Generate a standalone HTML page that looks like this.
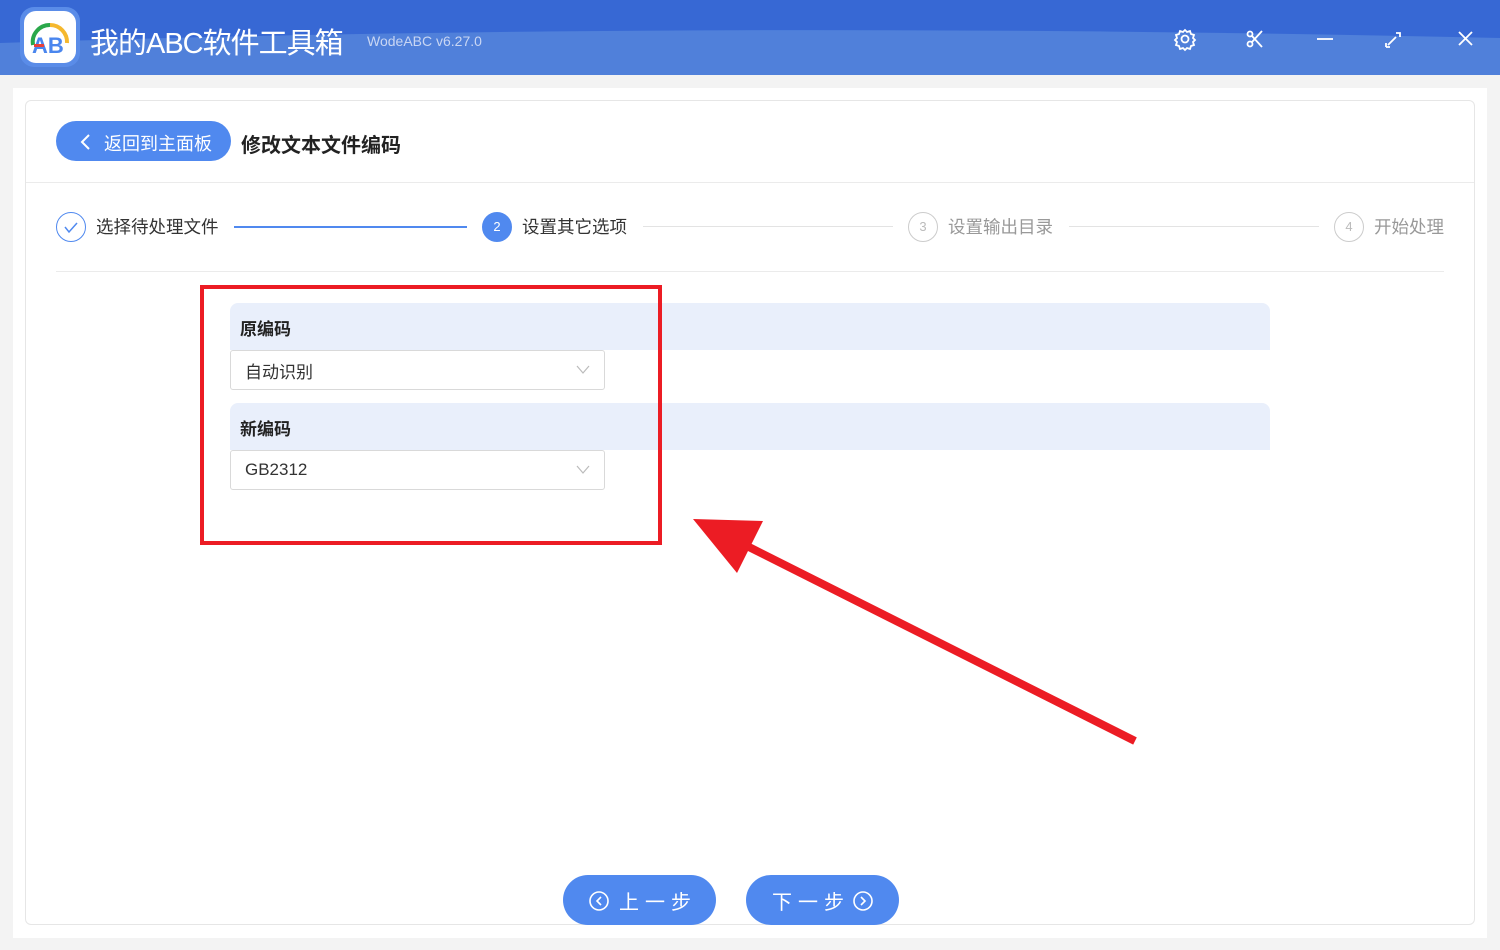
<!DOCTYPE html>
<html><head><meta charset="utf-8"><style>
*{margin:0;padding:0;box-sizing:border-box}
body{width:1500px;height:950px;background:#f3f3f3;font-family:"Liberation Sans","Noto Sans CJK SC",sans-serif;position:relative;overflow:hidden}
.abs{position:absolute}
.card{left:13px;top:88px;width:1474px;height:850px;background:#fff}
.inner{left:25px;top:100px;width:1450px;height:825px;border:1px solid #e6e6e6;border-radius:6px;background:#fff}
.t{white-space:nowrap}
.step{color:#333;font-size:17.5px}
.circ{width:30px;height:30px;border-radius:50%;border:1px solid #ccc;color:#bbb;font-size:13px;text-align:center;line-height:28px}
.panel{left:230px;width:1040px;height:47px;background:#e9effb;border-radius:8px 8px 0 0;font-weight:bold;font-size:17px;color:#222;padding:12px 0 0 10px}
.sel{left:230px;width:375px;height:40px;border:1px solid #d9d9d9;border-radius:3px;background:#fff;font-size:17px;color:#333;padding:7px 0 0 14px}
.btn{height:50px;width:153px;border-radius:25px;background:#5089ef;color:#fff;font-size:20px;letter-spacing:6px}
</style></head><body>
<svg class="abs" style="left:0;top:0" width="1500" height="75"><rect width="1500" height="75" fill="#3768d4"/><path d="M0 43 Q700 20 1500 38 L1500 75 L0 75Z" fill="#5080da"/></svg>
<div class="abs" style="left:20px;top:7px;width:60px;height:60px;border-radius:14px;background:#5a8ce8"></div>
<div class="abs" style="left:24px;top:11px;width:52px;height:52px;border-radius:12px;background:#fff"></div>
<svg class="abs" style="left:24px;top:11px" width="52" height="52"><path d="M9 34 A17 17 0 0 1 26 14" stroke="#2aa84a" stroke-width="4" fill="none"/><path d="M26 14 A17 17 0 0 1 43 32" stroke="#f5b82e" stroke-width="4" fill="none"/><text x="8" y="42" font-size="22" font-weight="bold" fill="#4a86ee" font-family="Liberation Sans">AB</text><rect x="10" y="33" width="10" height="3" fill="#e8403a"/></svg>
<div class="abs t" style="left:90px;top:20px;color:#fff;font-size:29px;letter-spacing:-1px">我的ABC软件工具箱</div>
<div class="abs t" style="left:367px;top:33px;color:#c9d6f3;font-size:14px">WodeABC v6.27.0</div>
<svg class="abs" style="left:1170px;top:25px" width="310" height="30" fill="none" stroke="#fff" stroke-width="1.8">
<circle cx="15" cy="14" r="3.5"/><path d="M15 5l2 2 3-1 1 3 3 1-1 3 2 2-2 2 1 3-3 1-1 3-3-1-2 2-2-2-3 1-1-3-3-1 1-3-2-2 2-2-1-3 3-1 1-3 3 1z"/>
<circle cx="80" cy="9" r="2.5"/><circle cx="80" cy="19" r="2.5"/><path d="M82 17l10-11M82 11l10 11"/>
<path d="M147 14h16"/>
<path d="M218 20l8-8M216 22l4 0M216 22l0-4M226 8l4 0 0 4"/>
<path d="M289 7l13 13M302 7l-13 13"/></svg>
<div class="abs card"></div><div class="abs inner"></div>
<div class="abs t" style="left:56px;top:121px;width:175px;height:40px;border-radius:20px;background:#5089ef;color:#fff;font-size:18px;padding:9px 0 0 48px">返回到主面板</div>
<svg class="abs" style="left:78px;top:132px" width="16" height="20"><path d="M11 3L4 10l7 7" stroke="#fff" stroke-width="2" fill="none"/></svg>
<div class="abs t" style="left:241px;top:129px;font-size:20px;font-weight:bold;color:#222">修改文本文件编码</div>
<div class="abs" style="left:26px;top:182px;width:1448px;height:1px;background:#ebebeb"></div>
<div class="abs circ" style="left:56px;top:212px;border-color:#5089ef"></div>
<svg class="abs" style="left:56px;top:212px" width="30" height="30"><path d="M9 15l4 5 8-9" stroke="#5089ef" stroke-width="1.5" fill="none"/></svg>
<div class="abs t step" style="left:96px;top:214px">选择待处理文件</div>
<div class="abs" style="left:234px;top:226px;width:233px;height:2px;background:#5089ef"></div>
<div class="abs circ" style="left:482px;top:212px;background:#5089ef;border-color:#5089ef;color:#fff">2</div>
<div class="abs t step" style="left:522px;top:214px">设置其它选项</div>
<div class="abs" style="left:643px;top:226px;width:250px;height:1px;background:#e3e3e3"></div>
<div class="abs circ" style="left:908px;top:212px">3</div>
<div class="abs t step" style="left:948px;top:214px;color:#999">设置输出目录</div>
<div class="abs" style="left:1069px;top:226px;width:250px;height:1px;background:#e3e3e3"></div>
<div class="abs circ" style="left:1334px;top:212px">4</div>
<div class="abs t step" style="left:1374px;top:214px;color:#999">开始处理</div>
<div class="abs" style="left:56px;top:271px;width:1388px;height:1px;background:#ebebeb"></div>
<div class="abs panel t" style="top:303px">原编码</div>
<div class="abs sel t" style="top:350px">自动识别</div>
<div class="abs panel t" style="top:403px">新编码</div>
<div class="abs sel t" style="top:450px;padding-top:9px">GB2312</div>
<svg class="abs" style="left:0;top:0" width="1500" height="950" fill="none">
<path d="M577 366l6 7 6-7M577 466l6 7 6-7" stroke="#bbb" stroke-width="1.2"/>
<rect x="202" y="287" width="458" height="256" stroke="#ec1c24" stroke-width="4"/>
<path d="M1135 741L745 545" stroke="#ec1c24" stroke-width="8"/>
<path d="M693 519L763 521L737 573Z" fill="#ec1c24"/>
</svg>
<div class="abs btn t" style="left:563px;top:875px;padding:11px 0 0 56px">上一步</div>
<div class="abs btn t" style="left:746px;top:875px;padding:11px 0 0 26px">下一步</div>
<svg class="abs" style="left:0;top:0;pointer-events:none" width="1500" height="950" fill="none" stroke="#fff" stroke-width="1.6">
<circle cx="599" cy="901" r="9"/><path d="M601 897l-4 4 4 4"/>
<circle cx="863" cy="901" r="9"/><path d="M861 897l4 4-4 4"/>
</svg>
</body></html>
